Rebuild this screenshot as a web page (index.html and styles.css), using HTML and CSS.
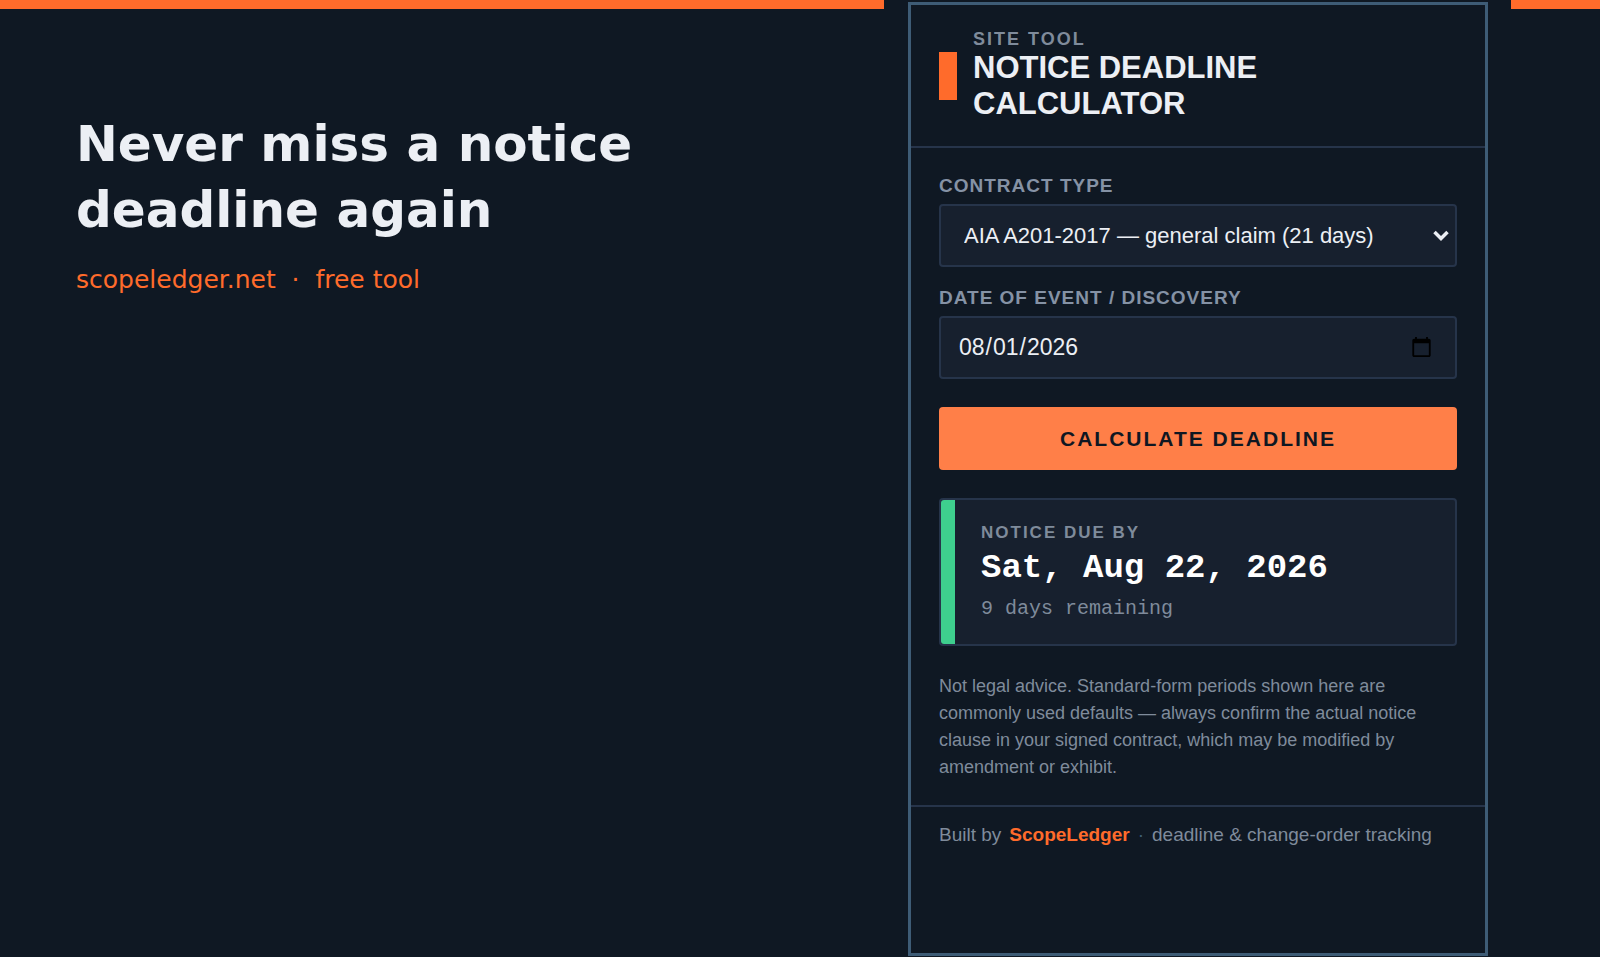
FILE: index.html
```html
<!DOCTYPE html>
<html lang="en">
<head>
    <meta charset="UTF-8">
    <meta name="viewport" content="width=device-width, initial-scale=1.0">
    <title>Notice Deadline Calculator</title>
    <link rel="stylesheet" href="styles.css">
</head>
<body>

    <main class="page">
        <!-- Intro -->
        <section class="intro">
            <h1>Never miss a notice<br>deadline again</h1>
            <p class="tagline">scopeledger.net &nbsp;·&nbsp; free tool</p>
        </section>

        <!-- Calculator -->
        <section class="tool">
            <div class="panel">
                <header class="panel-header">
                    <span class="mark"></span>
                    <div>
                        <p class="eyebrow">SITE TOOL</p>
                        <h2>NOTICE DEADLINE CALCULATOR</h2>
                    </div>
                </header>

                <form class="panel-body" id="calcForm">
                    <label for="contractType">CONTRACT TYPE</label>
                    <div class="select-wrap">
                        <select class="field" id="contractType">
                            <option value="21">AIA A201-2017 — general claim (21 days)</option>
                        </select>
                        <svg class="chevron" viewBox="0 0 16 11" aria-hidden="true">
                            <path d="M1.5 2 L8 8.5 L14.5 2"></path>
                        </svg>
                    </div>

                    <label for="eventDate">DATE OF EVENT / DISCOVERY</label>
                    <input class="field" type="date" id="eventDate" value="2026-08-01">

                    <button class="calc-btn" type="button">CALCULATE DEADLINE</button>

                    <div class="result">
                        <p class="result-label">NOTICE DUE BY</p>
                        <p class="due-date">Sat, Aug 22, 2026</p>
                        <p class="remaining">9 days remaining</p>
                    </div>

                    <p class="disclaimer">Not legal advice. Standard-form periods shown here are commonly used defaults — always confirm the actual notice clause in your signed contract, which may be modified by amendment or exhibit.</p>
                </form>

                <footer class="panel-footer">
                    <span>Built by</span>
                    <a href="#">ScopeLedger</a>
                    <span class="dot">·</span>
                    <span>deadline &amp; change-order tracking</span>
                </footer>
            </div>
        </section>

        <div class="edge"></div>
    </main>

</body>
</html>
```

FILE: styles.css
```css
* {
    margin: 0;
    padding: 0;
    box-sizing: border-box;
}

body {
    background: #0f1823;
    color: #eceff4;
    font-family: "Liberation Sans", Arial, sans-serif;
}

.page {
    display: grid;
    grid-template-columns: 1fr 627px 89px;
    min-height: 100vh;
}

.intro,
.edge {
    border-top: 9px solid #ff6b2b;
}

/* Intro */
.intro {
    padding: 102px 76px;
    font-family: "DejaVu Sans", sans-serif;
}

.intro h1 {
    font-size: 50px;
    line-height: 66px;
    font-weight: bold;
}

.tagline {
    margin-top: 22px;
    font-size: 25px;
    line-height: 30px;
    color: #ff6b2b;
}

/* Panel */
.tool {
    display: flex;
    padding: 2px 23px 1px 24px;
}

.panel {
    flex: 1;
    border: 3px solid #3e5c76;
    background: #0f1823;
}

.panel-header {
    display: flex;
    align-items: center;
    gap: 16px;
    padding: 24px 28px;
    border-bottom: 2px solid #26344a;
}

.mark {
    flex: none;
    width: 18px;
    height: 48px;
    background: #ff6b2b;
}

.eyebrow {
    font-size: 18px;
    line-height: 21px;
    font-weight: bold;
    letter-spacing: 2px;
    color: #7f8b9b;
}

.panel-header h2 {
    font-size: 31px;
    line-height: 36px;
}

.panel-body {
    display: flex;
    flex-direction: column;
    padding: 27px 28px 24px;
}

.panel-body label {
    margin-bottom: 8px;
    font-size: 19px;
    line-height: 21px;
    font-weight: bold;
    letter-spacing: 1px;
    color: #8592a5;
}

.field {
    width: 100%;
    height: 63px;
    border: 2px solid #26344a;
    border-radius: 4px;
    background: #17202e;
    color: #eceff4;
    font-family: inherit;
    font-size: 22px;
}

.select-wrap {
    position: relative;
    margin-bottom: 20px;
}

select.field {
    appearance: none;
    padding: 0 48px 0 23px;
}

input.field {
    padding: 0 20px 0 17px;
    font-size: 23px;
}

.chevron {
    position: absolute;
    top: 26px;
    right: 8px;
    width: 16px;
    height: 11px;
    fill: none;
    stroke: #eceff4;
    stroke-width: 3.5;
    pointer-events: none;
}

.calc-btn {
    height: 63px;
    margin: 28px 0;
    border: none;
    border-radius: 4px;
    background: #ff7f48;
    color: #0f1722;
    font-family: inherit;
    font-size: 21px;
    font-weight: bold;
    letter-spacing: 2px;
    cursor: pointer;
}

.result {
    position: relative;
    padding: 22px 40px;
    border: 2px solid #26344a;
    border-radius: 4px;
    background: #17202e;
}

.result::before {
    content: "";
    position: absolute;
    top: 0;
    bottom: 0;
    left: 0;
    width: 14px;
    border-radius: 3px 0 0 3px;
    background: #3ecf8e;
}

.result-label {
    font-size: 17px;
    line-height: 21px;
    font-weight: bold;
    letter-spacing: 2px;
    color: #7f8b9b;
}

.due-date {
    margin: 5px 0 7px;
    font-family: "Liberation Mono", monospace;
    font-size: 34px;
    line-height: 40px;
    font-weight: bold;
    color: #fff;
}

.remaining {
    font-family: "Liberation Mono", monospace;
    font-size: 20px;
    line-height: 27px;
    color: #7f8b9b;
}

.disclaimer {
    margin-top: 27px;
    font-size: 18px;
    line-height: 27px;
    color: #7f8b9b;
}

.panel-footer {
    display: flex;
    gap: 8px;
    padding: 16px 28px;
    border-top: 2px solid #26344a;
    font-size: 19px;
    line-height: 24px;
    color: #7f8b9b;
}

.panel-footer a {
    color: #ff6b2b;
    font-weight: bold;
    text-decoration: none;
}

.dot {
    color: #3e5c76;
}
```
